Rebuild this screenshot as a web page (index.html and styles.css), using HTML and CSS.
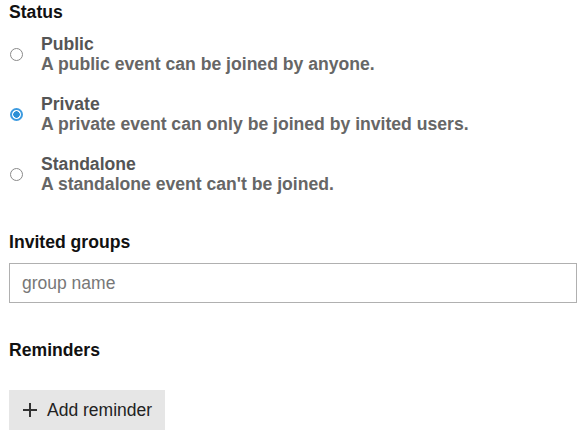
FILE: index.html
```html
<!DOCTYPE html>
<html>
<head>
<meta charset="utf-8">
<link rel="stylesheet" href="styles.css">
</head>
<body>
<div class="form">
  <div class="section-label status-label">Status</div>
  <div class="options">
    <label class="option">
      <span class="radio"></span>
      <span class="option-text">
        <span class="option-title">Public</span>
        <span class="option-desc">A public event can be joined by anyone.</span>
      </span>
    </label>
    <label class="option">
      <span class="radio checked"></span>
      <span class="option-text">
        <span class="option-title">Private</span>
        <span class="option-desc">A private event can only be joined by invited users.</span>
      </span>
    </label>
    <label class="option">
      <span class="radio"></span>
      <span class="option-text">
        <span class="option-title">Standalone</span>
        <span class="option-desc">A standalone event can't be joined.</span>
      </span>
    </label>
  </div>

  <div class="section-label groups-label">Invited groups</div>
  <input class="text-input" type="text" placeholder="group name">

  <div class="section-label reminders-label">Reminders</div>
  <button class="add-btn" type="button">
    <svg class="plus" width="16" height="16" viewBox="0 0 16 16"><path d="M8 1v14M1 8h14" stroke="#333" stroke-width="2" fill="none"/></svg>
    <span>Add reminder</span>
  </button>
</div>
</body>
</html>
```
FILE: styles.css
```css
html, body {
  margin: 0;
  padding: 0;
  background: #fff;
}
body {
  font-family: "Liberation Sans", Arial, sans-serif;
  font-size: 17.6px;
  line-height: 20px;
}
.form {
  padding: 2px 5px 0 9px;
  display: flex;
  flex-direction: column;
  align-items: flex-start;
}
.section-label {
  font-weight: bold;
  color: #111;
}
.options {
  display: flex;
  flex-direction: column;
  gap: 20px;
  margin-top: 12px;
}
.option {
  display: flex;
  align-items: center;
  gap: 18px;
  padding-left: 1px;
}
.radio {
  box-sizing: border-box;
  width: 13px;
  height: 13px;
  border-radius: 50%;
  border: 1.5px solid #8a8a8a;
  flex: none;
  margin-top: 1px;
}
.radio.checked {
  border: 2px solid #3d9be0;
  background: radial-gradient(circle, #2b8fd6 0 3px, #fff 3.5px);
}
.option-text {
  display: flex;
  flex-direction: column;
  font-weight: bold;
}
.option-title {
  color: #555;
}
.option-desc {
  color: #666;
}
.groups-label {
  margin-top: 38px;
}
.text-input {
  box-sizing: border-box;
  margin-top: 11px;
  width: 568px;
  height: 40px;
  border: 1px solid #b0b0b0;
  padding: 0 12px;
  font-family: "Liberation Sans", Arial, sans-serif;
  font-size: 17.5px;
  color: #222;
  outline: none;
}
.text-input::placeholder {
  color: #777;
}
.reminders-label {
  margin-top: 37px;
}
.add-btn {
  margin-top: 30px;
  display: flex;
  align-items: center;
  gap: 9px;
  height: 40px;
  padding: 0 13px 0 13px;
  border: none;
  background: #e6e6e6;
  font-family: "Liberation Sans", Arial, sans-serif;
  font-size: 17.5px;
  color: #222;
}
.plus {
  flex: none;
}
```
